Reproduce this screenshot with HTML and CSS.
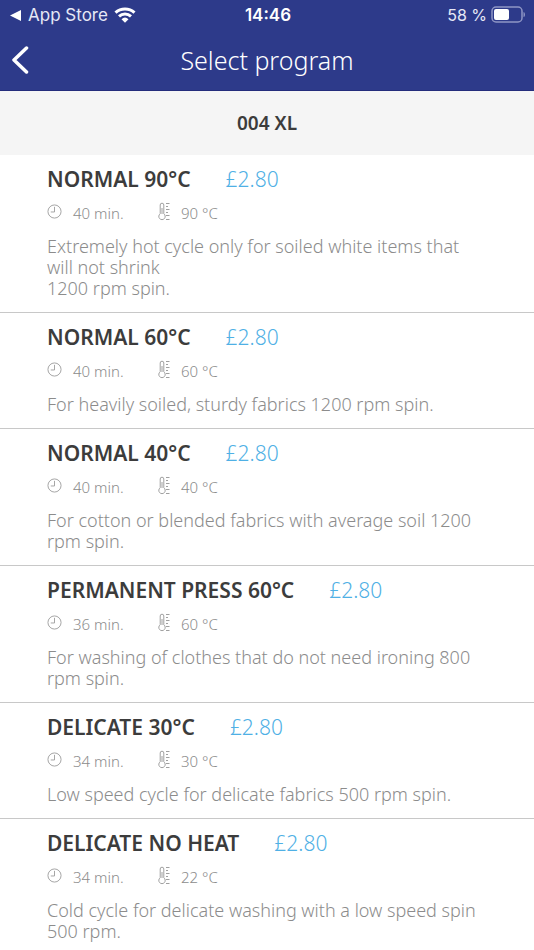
FILE: index.html
```html
<!DOCTYPE html>
<html lang="en">
<head>
<meta charset="utf-8">
<meta name="viewport" content="width=device-width, initial-scale=1">
<title>Select program</title>
<link rel="stylesheet" href="styles.css">
</head>
<body>
<svg class="symbols" aria-hidden="true">
  <symbol id="clock" viewBox="0 0 16 16">
    <circle cx="8" cy="8" r="7"/>
    <path d="M8 3v5.500H4"/>
  </symbol>
  <symbol id="thermometer" viewBox="0 0 12 19">
    <path d="M2.200 11.800V3a1.800 1.800 0 0 1 3.600 0v8.800a3.200 3.200 0 1 1-3.600 0z"/>
    <path d="M4 6v6"/>
    <path d="M8 1.500h3.500M8 4.500h2M8 7.500h3.500M8 10.500h2M8 13.500h3.500M8 17.500h3.500"/>
  </symbol>
</svg>
<header class="top">
  <div class="status">
    <div class="status-left">
      <a class="return" href="#"><svg class="return-arrow" viewBox="0 0 11 11" aria-hidden="true"><path d="M0 5.500 11 0v11z"/></svg>App Store</a>
      <svg class="wifi" viewBox="0 0 22 16" role="img" aria-label="Wi-Fi">
        <path d="M1.500 5.600a14 14 0 0 1 19 0M5 9.300a9 9 0 0 1 12 0"/>
        <path class="wifi-dot" d="M7.500 12.200a5.200 5.200 0 0 1 7 0L11 15.700z"/>
      </svg>
    </div>
    <time class="time">14:46</time>
    <div class="status-right">
      <span>58 %</span>
      <svg class="battery" viewBox="0 0 35 18" role="img" aria-label="Battery">
        <rect class="battery-shell" x="1" y="1" width="30" height="15" rx="4"/>
        <rect class="battery-level" x="3" y="3" width="15" height="11" rx="2"/>
        <path class="battery-tip" d="M32.500 6q1.500 0 1.500 2.500t-1.500 2.500z"/>
      </svg>
    </div>
  </div>
  <div class="nav">
    <button class="back" type="button" aria-label="Back"><svg viewBox="0 0 18 28" aria-hidden="true"><path d="M15.500 2 3 14l12.500 12"/></svg></button>
    <h1>Select program</h1>
  </div>
</header>
<main>
  <h2 class="machine">004 XL</h2>
  <ul class="programs">
    <li class="program">
      <div class="heading"><h3>NORMAL 90°C</h3><span class="price">£2.80</span></div>
      <div class="facts"><span class="fact time-fact"><svg class="clock"><use href="#clock"/></svg>40 min.</span><span class="fact"><svg class="thermo"><use href="#thermometer"/></svg>90 °C</span></div>
      <p>Extremely hot cycle only for soiled white items that will not shrink<br>1200 rpm spin.</p>
    </li>
    <li class="program">
      <div class="heading"><h3>NORMAL 60°C</h3><span class="price">£2.80</span></div>
      <div class="facts"><span class="fact time-fact"><svg class="clock"><use href="#clock"/></svg>40 min.</span><span class="fact"><svg class="thermo"><use href="#thermometer"/></svg>60 °C</span></div>
      <p>For heavily soiled, sturdy fabrics 1200 rpm spin.</p>
    </li>
    <li class="program">
      <div class="heading"><h3>NORMAL 40°C</h3><span class="price">£2.80</span></div>
      <div class="facts"><span class="fact time-fact"><svg class="clock"><use href="#clock"/></svg>40 min.</span><span class="fact"><svg class="thermo"><use href="#thermometer"/></svg>40 °C</span></div>
      <p>For cotton or blended fabrics with average soil 1200 rpm spin.</p>
    </li>
    <li class="program">
      <div class="heading"><h3>PERMANENT PRESS 60°C</h3><span class="price">£2.80</span></div>
      <div class="facts"><span class="fact time-fact"><svg class="clock"><use href="#clock"/></svg>36 min.</span><span class="fact"><svg class="thermo"><use href="#thermometer"/></svg>60 °C</span></div>
      <p>For washing of clothes that do not need ironing 800 rpm spin.</p>
    </li>
    <li class="program">
      <div class="heading"><h3>DELICATE 30°C</h3><span class="price">£2.80</span></div>
      <div class="facts"><span class="fact time-fact"><svg class="clock"><use href="#clock"/></svg>34 min.</span><span class="fact"><svg class="thermo"><use href="#thermometer"/></svg>30 °C</span></div>
      <p>Low speed cycle for delicate fabrics 500 rpm spin.</p>
    </li>
    <li class="program">
      <div class="heading"><h3>DELICATE NO HEAT</h3><span class="price">£2.80</span></div>
      <div class="facts"><span class="fact time-fact"><svg class="clock"><use href="#clock"/></svg>34 min.</span><span class="fact"><svg class="thermo"><use href="#thermometer"/></svg>22 °C</span></div>
      <p>Cold cycle for delicate washing with a low speed spin 500 rpm.</p>
    </li>
  </ul>
</main>
</body>
</html>
```
FILE: styles.css
```css
* { box-sizing: border-box; }
body {
  margin: 0;
  background: #fff;
  color: #3c3c3c;
  font-family: "Noto Sans", "Open Sans", sans-serif;
}
h1, h2, h3, p, ul { margin: 0; padding: 0; }
svg { display: block; flex: none; fill: none; }
.symbols { position: absolute; width: 0; height: 0; }

.top {
  background: #2d3a8a;
  border-bottom: 1px solid #242d7c;
  color: #fff;
}
.status {
  display: grid;
  grid-template-columns: 1fr auto 1fr;
  align-items: center;
  height: 30px;
  padding: 0 8px 0 10px;
  font: 17px/20px Inter, sans-serif;
  color: #e6e8f6;
}
.status-left, .status-right { display: flex; align-items: center; gap: 6px; }
.status-right { justify-content: flex-end; gap: 4px; font-size: 16px; }
.return { display: flex; align-items: center; gap: 7px; color: inherit; text-decoration: none; }
.return-arrow { width: 11px; height: 11px; fill: #fff; }
.wifi { width: 22px; height: 16px; stroke: #fff; stroke-width: 3; }
.wifi-dot { fill: #fff; stroke: none; }
.time { font-weight: 600; color: #fff; }
.battery { width: 35px; height: 18px; }
.battery-shell { stroke: #8f96c5; stroke-width: 1.500; }
.battery-level { fill: #fff; }
.battery-tip { fill: #8f96c5; }

.nav {
  display: grid;
  grid-template-columns: 48px 1fr 48px;
  align-items: center;
  height: 60px;
}
.back { padding: 0 0 0 11px; border: 0; background: none; }
.back svg { width: 18px; height: 28px; stroke: #fff; stroke-width: 3.500; stroke-linecap: round; stroke-linejoin: round; }
.nav h1 { font-size: 25px; line-height: 32px; font-weight: 300; text-align: center; }

.machine {
  background: #f5f5f5;
  font-size: 19px;
  line-height: 64px;
  font-weight: 600;
  text-align: center;
}
.programs { list-style: none; }
.program {
  padding: 10px 47px 13px;
  border-bottom: 1px solid #c8c8c8;
}
.heading { display: flex; align-items: center; gap: 35px; line-height: 28px; }
.heading h3 { font-size: 21px; font-weight: 600; }
.price { font-size: 21px; font-weight: 300; color: #4fb0e5; }
.facts { display: flex; height: 40px; align-items: center; margin-bottom: 3px; color: #8c8c8c; font-size: 15px; line-height: 20px; font-weight: 300; }
.fact { display: flex; align-items: center; gap: 11px; }
.fact svg { margin-bottom: 4px; stroke: #a0a0a0; }
.time-fact { width: 111px; }
.clock { width: 15px; height: 15px; }
.thermo { width: 12px; height: 19px; }
.program p { font-size: 18px; line-height: 21px; font-weight: 300; color: #8c8c8c; }
```
